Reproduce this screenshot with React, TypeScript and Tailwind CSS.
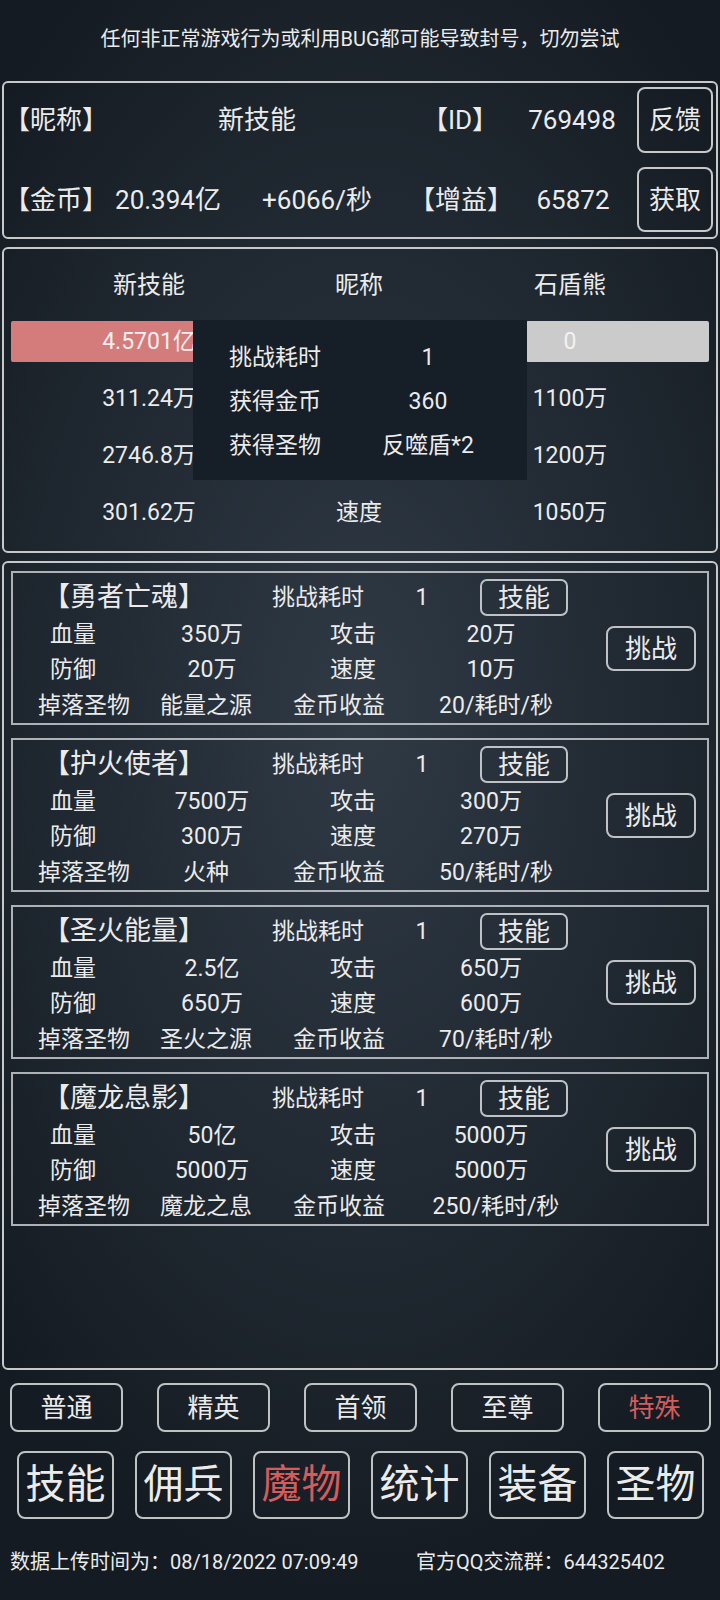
import React from "react";

const cards = [
  { name: "勇者亡魂", hp: "350万", atk: "20万", def: "20万", spd: "10万", drop: "能量之源", gold: "20/耗时/秒" },
  { name: "护火使者", hp: "7500万", atk: "300万", def: "300万", spd: "270万", drop: "火种", gold: "50/耗时/秒" },
  { name: "圣火能量", hp: "2.5亿", atk: "650万", def: "650万", spd: "600万", drop: "圣火之源", gold: "70/耗时/秒" },
  { name: "魔龙息影", hp: "50亿", atk: "5000万", def: "5000万", spd: "5000万", drop: "魔龙之息", gold: "250/耗时/秒" },
];

function Card({ c }: { c: (typeof cards)[number] }) {
  return (
    <div className="h-[154px] border-2 border-[#aeb2b6] flex">
      <div className="w-[580px] shrink-0 flex flex-col pt-[6px] text-[23px] leading-none">
        <div className="h-[37px] flex items-center">
          <span className="w-[222px] text-center text-[27px]">【{c.name}】</span>
          <span className="w-[166px] text-center">挑战耗时</span>
          <span className="w-[42px] text-center">1</span>
          <div className="ml-[37px] w-[88px] h-[37px] rounded-[7px] border-2 border-[#bfc2c5] flex items-center justify-center text-[26px]">技能</div>
        </div>
        <div className="h-[36px] flex items-center">
          <span className="w-[120px] text-center">血量</span>
          <span className="w-[158px] text-center">{c.hp}</span>
          <span className="w-[124px] text-center">攻击</span>
          <span className="w-[152px] text-center">{c.atk}</span>
        </div>
        <div className="h-[35px] flex items-center">
          <span className="w-[120px] text-center">防御</span>
          <span className="w-[158px] text-center">{c.def}</span>
          <span className="w-[124px] text-center">速度</span>
          <span className="w-[152px] text-center">{c.spd}</span>
        </div>
        <div className="h-[36px] flex items-center">
          <span className="w-[142px] text-center">掉落圣物</span>
          <span className="w-[102px] text-center">{c.drop}</span>
          <span className="w-[164px] text-center">金币收益</span>
          <span className="w-[150px] text-center">{c.gold}</span>
        </div>
      </div>
      <div className="pt-[53px] pl-[13px]">
        <div className="w-[90px] h-[45px] rounded-[8px] border-2 border-[#bfc2c5] flex items-center justify-center text-[26px] leading-none">挑战</div>
      </div>
    </div>
  );
}

export default function App() {
  const tabs1 = ["普通", "精英", "首领", "至尊", "特殊"];
  const tabs2 = ["技能", "佣兵", "魔物", "统计", "装备", "圣物"];
  return (
    <div className="w-[720px] h-[1600px] overflow-hidden flex flex-col text-[#ebebeb] font-[Roboto,'Noto_Sans_CJK_SC',sans-serif] bg-[radial-gradient(ellipse_70%_55%_at_50%_45%,#303a45_0%,#222b34_50%,#151b22_100%)]">
      {/* notice */}
      <div className="h-[81px] shrink-0 flex items-center justify-center pb-[4px] text-[20px] leading-none">
        任何非正常游戏行为或利用BUG都可能导致封号，切勿尝试
      </div>

      {/* player panel */}
      <div className="ml-[2px] w-[716px] h-[158px] shrink-0 border-2 border-[#c6c8ca] rounded-[6px] flex flex-col pt-[4px] text-[26px] leading-none">
        <div className="h-[66px] flex items-center">
          <span className="w-[99px] text-center">【昵称】</span>
          <span className="w-[308px] text-center">新技能</span>
          <span className="w-[98px] text-center">【ID】</span>
          <span className="w-[126px] text-center">769498</span>
          <div className="ml-[2px] w-[76px] h-[66px] rounded-[8px] border-2 border-[#c6c8ca] flex items-center justify-center">反馈</div>
        </div>
        <div className="h-[65px] mt-[14px] flex items-center">
          <span className="w-[99px] text-center">【金币】</span>
          <span className="w-[130px] text-center">20.394亿</span>
          <span className="w-[168px] text-center">+6066/秒</span>
          <span className="w-[120px] text-center">【增益】</span>
          <span className="w-[104px] text-center">65872</span>
          <div className="ml-[12px] w-[76px] h-[65px] rounded-[8px] border-2 border-[#c6c8ca] flex items-center justify-center">获取</div>
        </div>
      </div>

      {/* battle panel */}
      <div className="relative mt-[8px] ml-[2px] w-[716px] h-[306px] shrink-0 border-2 border-[#c6c8ca] rounded-[6px] flex flex-col pt-[7px] text-[23px] leading-none">
        <div className="h-[57px] flex items-center text-[24px]">
          <span className="w-[290px] text-center">新技能</span>
          <span className="w-[130px] text-center">昵称</span>
          <span className="w-[292px] text-center">石盾熊</span>
        </div>
        <div className="h-[57px] flex items-center">
          <div className="ml-[7px] w-[276px] h-[41px] rounded-[2px] bg-[#d47c7c] flex items-center justify-center text-[#f4eeee]">4.5701亿</div>
          <div className="ml-[239px] w-[183px] h-[41px] rounded-[2px] bg-[#cbcbcb] flex items-center text-[#f2f2f2]">
            <span className="w-[88px] text-center">0</span>
          </div>
        </div>
        <div className="h-[57px] flex items-center">
          <span className="w-[290px] text-center">311.24万</span>
          <span className="w-[130px] text-center">血量</span>
          <span className="w-[292px] text-center">1100万</span>
        </div>
        <div className="h-[57px] flex items-center">
          <span className="w-[290px] text-center">2746.8万</span>
          <span className="w-[130px] text-center">攻击</span>
          <span className="w-[292px] text-center">1200万</span>
        </div>
        <div className="h-[57px] flex items-center">
          <span className="w-[290px] text-center">301.62万</span>
          <span className="w-[130px] text-center">速度</span>
          <span className="w-[292px] text-center">1050万</span>
        </div>

        {/* result popup */}
        <div className="absolute left-[189px] top-[71px] w-[334px] h-[160px] bg-[#161e27] flex flex-col pt-[15px]">
          <div className="h-[44px] flex items-center">
            <span className="w-[164px] text-center">挑战耗时</span>
            <span className="w-[142px] text-center">1</span>
          </div>
          <div className="h-[44px] flex items-center">
            <span className="w-[164px] text-center">获得金币</span>
            <span className="w-[142px] text-center">360</span>
          </div>
          <div className="h-[44px] flex items-center">
            <span className="w-[164px] text-center">获得圣物</span>
            <span className="w-[142px] text-center">反噬盾*2</span>
          </div>
        </div>
      </div>

      {/* monster list */}
      <div className="mt-[8px] ml-[2px] w-[716px] h-[809px] shrink-0 border-2 border-[#c6c8ca] rounded-[6px] flex flex-col gap-[13px] pt-[8px] px-[7px]">
        {cards.map((c) => (
          <Card key={c.name} c={c} />
        ))}
      </div>

      {/* tabs row 1 */}
      <div className="mt-[13px] pl-[10px] flex gap-[34px] shrink-0">
        {tabs1.map((t) => (
          <div
            key={t}
            className={
              "w-[113px] h-[49px] rounded-[8px] border-2 border-[#bfc2c5] flex items-center justify-center text-[26px] leading-none " +
              (t === "特殊" ? "text-[#d35c5c]" : "")
            }
          >
            {t}
          </div>
        ))}
      </div>

      {/* tabs row 2 */}
      <div className="mt-[19px] pl-[17px] flex gap-[21px] shrink-0">
        {tabs2.map((t) => (
          <div
            key={t}
            className={
              "w-[97px] h-[68px] rounded-[8px] border-2 border-[#bfc2c5] flex items-center justify-center text-[40px] leading-none " +
              (t === "魔物" ? "text-[#d35c5c]" : "")
            }
          >
            {t}
          </div>
        ))}
      </div>

      {/* footer */}
      <div className="mt-[28px] h-[30px] flex items-center text-[20px] leading-none shrink-0">
        <span className="ml-[10px] w-[406px]">数据上传时间为：08/18/2022 07:09:49</span>
        <span>官方QQ交流群：644325402</span>
      </div>
    </div>
  );
}
